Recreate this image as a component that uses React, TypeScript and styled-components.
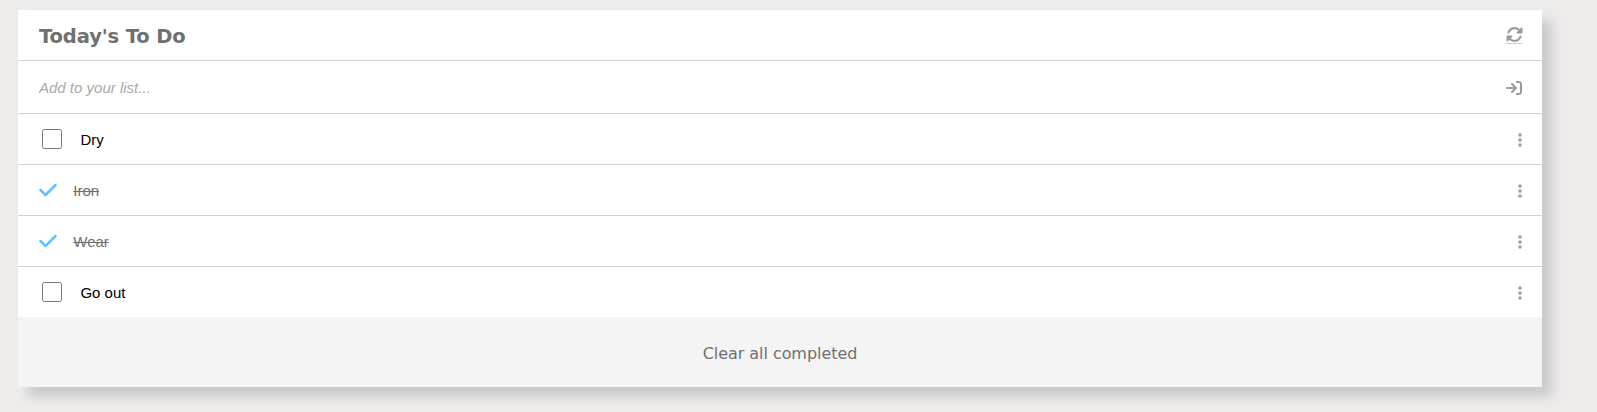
import React from 'react';
import styled, { createGlobalStyle } from 'styled-components';
import { FaRotate, FaCheck, FaEllipsisVertical, FaArrowRightToBracket } from 'react-icons/fa6';

const Global = createGlobalStyle`
  * { box-sizing: border-box; }
  body { margin: 0; background: #eeecea; height: 412px; overflow: hidden; font-family: "Liberation Sans", Arial, sans-serif; }
`;
const Card = styled.main`
  margin: 10px 55px 0 18px;
  background: #fff;
  box-shadow: 10px 10px 10px #cbcacb;
`;
const Row = styled.div<{ $h: number; $last?: boolean }>`
  display: flex;
  align-items: center;
  height: ${p => p.$h}px;
  padding: 0 20px 0 21px;
  border-bottom: ${p => (p.$last ? '0' : '1px solid #d3d3d3')};
  color: #9b9b9b;
`;
const Title = styled.h1`
  flex: 1;
  margin: 0;
  padding-top: 3px;
  font: bold 19.5px "DejaVu Sans", Verdana, sans-serif;
  letter-spacing: -0.12px;
  color: #707070;
`;
const Refresh = styled.button`
  display: flex;
  justify-content: center;
  width: 16px;
  height: 17px;
  margin-top: 1px;
  padding: 0;
  border: 0;
  border-bottom: 1px solid #ccc;
  background: none;
  color: inherit;

  svg {
    flex: none;
    width: 17px;
    height: 17px;
    margin-top: -1px;
  }
`;
const Enter = styled(FaArrowRightToBracket)`
  width: 16px;
  height: 16px;
  margin-top: 2px;
`;
const Entry = styled.input`
  flex: 1;
  border: 0;
  padding: 0;
  outline: 0;
  font: italic 15px "Liberation Sans", Arial, sans-serif;
  &::placeholder { color: #a9a9a9; }
`;
const Box = styled.span`
  width: 20px;
  height: 20px;
  margin: 0 18.4px 0 3px;
  border: 1px solid #767676;
  border-radius: 2.5px;
`;
const Tick = styled(FaCheck)`
  width: 20px;
  height: 20px;
  margin: 0 15.3px 0 -1px;
  color: #5fc3f7;
`;
const Dots = styled(FaEllipsisVertical)`
  width: 16px;
  height: 16px;
  margin: 2px -6px 0 0;
`;
const Label = styled.span<{ $done: boolean }>`
  flex: 1;
  font-size: 15px;
  color: ${p => (p.$done ? '#707070' : '#000')};
  text-decoration: ${p => (p.$done ? 'line-through' : 'none')};
`;
const Clear = styled.div`
  display: flex;
  align-items: center;
  justify-content: center;
  height: 70px;
  padding-top: 3px;
  background: #f4f4f4;
  color: #707070;
  font: 16px "DejaVu Sans", Verdana, sans-serif;
  letter-spacing: -0.05px;
`;
const tasks = [
  { name: 'Dry', done: false },
  { name: 'Iron', done: true },
  { name: 'Wear', done: true },
  { name: 'Go out', done: false },
];
export default function App() {
  return (
    <>
      <Global />
      <Card>
        <Row $h={51}>
          <Title>Today's To Do</Title>
          <Refresh aria-label="Refresh"><FaRotate /></Refresh>
        </Row>
        <Row $h={53}>
          <Entry placeholder="Add to your list..." />
          <Enter />
        </Row>
        {tasks.map((t, i) => (
          <Row key={t.name} $h={i === 3 ? 50 : 51} $last={i === 3}>
            {t.done ? <Tick /> : <Box />}
            <Label $done={t.done}>{t.name}</Label>
            <Dots />
          </Row>
        ))}
        <Clear>Clear all completed</Clear>
      </Card>
    </>
  );
}
